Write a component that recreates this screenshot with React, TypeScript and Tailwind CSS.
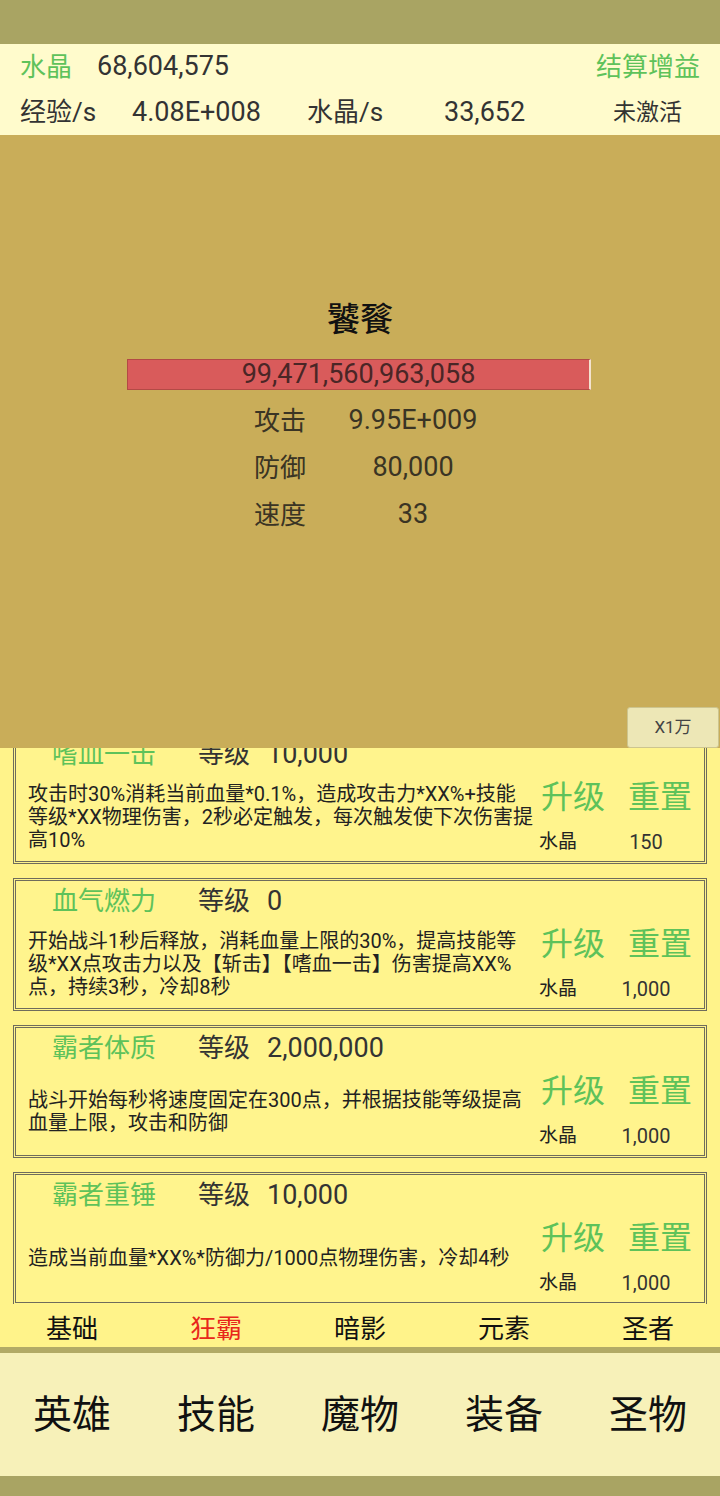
import React from 'react';

const skills = [
  {
    name: '嗜血一击',
    level: '10,000',
    desc: '攻击时30%消耗当前血量*0.1%，造成攻击力*XX%+技能等级*XX物理伤害，2秒必定触发，每次触发使下次伤害提高10%',
    cost: '150',
  },
  {
    name: '血气燃力',
    level: '0',
    desc: '开始战斗1秒后释放，消耗血量上限的30%，提高技能等级*XX点攻击力以及【斩击】【嗜血一击】伤害提高XX%点，持续3秒，冷却8秒',
    cost: '1,000',
  },
  {
    name: '霸者体质',
    level: '2,000,000',
    desc: '战斗开始每秒将速度固定在300点，并根据技能等级提高血量上限，攻击和防御',
    cost: '1,000',
  },
  {
    name: '霸者重锤',
    level: '10,000',
    desc: '造成当前血量*XX%*防御力/1000点物理伤害，冷却4秒',
    cost: '1,000',
  },
];

const tabs = ['基础', '狂霸', '暗影', '元素', '圣者'];
const nav = ['英雄', '技能', '魔物', '装备', '圣物'];

function SkillCard({ s }: { s: (typeof skills)[number] }) {
  return (
    <div className="h-[133px] shrink-0 border-[3px] border-double border-[#6f6c5c] bg-[#fff48d]">
      {/* Header */}
      <div className="flex h-[40px] items-center pl-[36px] text-[26px] leading-none">
        <span className="w-[146px] text-[#5ec25a]">{s.name}</span>
        <span className="w-[69px] text-[#333]">等级</span>
        <span className="text-[27px] text-[#333]">{s.level}</span>
      </div>
      <div className="flex h-[87px]">
        <div className="flex w-[518px] shrink-0 items-center pl-[12px]">
          <p className="w-[506px] text-[20px] leading-[23px] text-[#222]">{s.desc}</p>
        </div>
        <div className="flex flex-col pl-[5px] pt-[3px]">
          <div className="flex h-[40px] items-center pl-[2px] text-[32px] leading-none text-[#5ec25a]">
            <span>升级</span>
            <span className="ml-[23px]">重置</span>
          </div>
          <div className="mt-[13px] flex h-[24px] items-center text-[19px] text-[#222]">
            <span className="w-[58px]">水晶</span>
            <span className="w-[98px] text-center text-[20px] text-[#333]">{s.cost}</span>
          </div>
        </div>
      </div>
    </div>
  );
}

export default function App() {
  return (
    <div
      className="flex h-[1496px] w-[720px] flex-col overflow-hidden bg-[#a9a463]"
      style={{ fontFamily: "Roboto, 'Noto Sans CJK SC', sans-serif" }}
    >
      <div className="h-[44px] shrink-0 bg-[#a9a463]" />

      {/* Stats header */}
      <div className="h-[91px] shrink-0 bg-[#fffbcc] text-[#333]">
        <div className="flex h-[45px] items-center pl-[20px] pr-[20px] text-[26px] leading-none">
          <span className="w-[77px] text-[#5ec25a]">水晶</span>
          <span className="text-[27px]">68,604,575</span>
          <span className="ml-auto text-[#5ec25a]">结算增益</span>
        </div>
        <div className="flex h-[46px] items-center pl-[20px] text-[26px] leading-none">
          <span className="w-[112px]">经验/s</span>
          <span className="w-[175px] text-[27px]">4.08E+008</span>
          <span className="w-[137px]">水晶/s</span>
          <span className="w-[169px] text-[27px]">33,652</span>
          <span className="text-[23px]">未激活</span>
        </div>
      </div>

      {/* Monster panel */}
      <div className="relative z-10 flex h-[613px] shrink-0 flex-col bg-[#c9ad59] pt-[165px]">
        <div className="h-[40px] text-center text-[33px] leading-[40px] font-medium text-[#111]">饕餮</div>
        <div className="ml-[127px] mt-[19px] flex h-[31px] w-[464px] items-center justify-center border border-[#b34a45] border-r-[2px] border-r-[#f3e2cf] bg-[#d95b5b] text-[27px] leading-none text-[#4a2626]">
          99,471,560,963,058
        </div>
        <div className="mt-[7px] flex flex-col text-[26px] leading-none text-[#3a3424]">
          {[
            ['攻击', '9.95E+009'],
            ['防御', '80,000'],
            ['速度', '33'],
          ].map(([k, v]) => (
            <div key={k} className="flex h-[47px] items-center pl-[254px]">
              <span className="w-[52px]">{k}</span>
              <span className="w-[214px] text-center text-[27px]">{v}</span>
            </div>
          ))}
        </div>
        <button className="absolute bottom-0 right-[1px] h-[41px] w-[92px] rounded-[3px] border border-[#cdc58f] bg-[#ede7b6] text-[17px] text-[#444]">
          X1万
        </button>
      </div>

      {/* Skill list */}
      <div className="h-[556px] shrink-0 overflow-hidden bg-[#fff38a]">
        <div className="-mt-[17px] flex flex-col gap-[14px] px-[13px]">
          {skills.map((s) => (
            <SkillCard key={s.name} s={s} />
          ))}
        </div>
      </div>

      {/* Category tabs */}
      <div className="grid h-[43px] shrink-0 grid-cols-5 items-center bg-[#fff38a] pt-[6px] text-[26px] leading-none">
        {tabs.map((t) => (
          <span key={t} className={`text-center ${t === '狂霸' ? 'text-[#e8261b]' : 'text-[#111]'}`}>
            {t}
          </span>
        ))}
      </div>
      <div className="h-[6px] shrink-0 bg-[#b2aa66]" />

      {/* Bottom nav */}
      <div className="grid h-[123px] shrink-0 grid-cols-5 items-center bg-[#f7f1b9] pt-[2px] text-[39px] leading-none text-[#111]">
        {nav.map((n) => (
          <span key={n} className="text-center">
            {n}
          </span>
        ))}
      </div>
      <div className="h-[20px] shrink-0 bg-[#a9a463]" />
    </div>
  );
}
